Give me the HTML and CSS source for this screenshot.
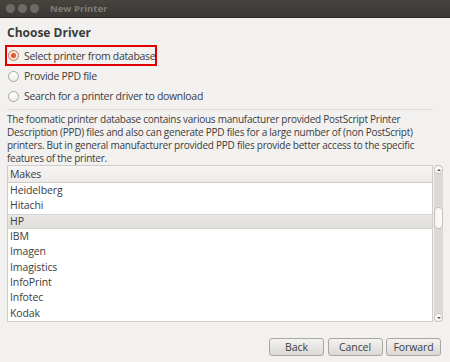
FILE: index.html
```html
<!DOCTYPE html>
<html lang="en">
<head>
    <meta charset="UTF-8">
    <title>New Printer</title>
    <link rel="stylesheet" href="styles.css">
</head>
<body>
    <div class="window">
        <div class="titlebar">
            <div class="controls">
                <span class="ctl"></span>
                <span class="ctl"></span>
                <span class="ctl"></span>
            </div>
            <span class="title">New Printer</span>
        </div>

        <div class="content">
            <h1>Choose Driver</h1>
            <div class="options">
                <label class="option highlight"><span class="radio checked"></span>Select printer from database</label>
                <label class="option"><span class="radio"></span>Provide PPD file</label>
                <label class="option"><span class="radio"></span>Search for a printer driver to download</label>
            </div>
            <hr class="sep">
            <p class="desc">The foomatic printer database contains various manufacturer provided PostScript Printer Description (PPD) files and also can generate PPD files for a large number of (non PostScript) printers. But in general manufacturer provided PPD files provide better access to the specific features of the printer.</p>

            <div class="list-wrap">
                <div class="list">
                    <div class="list-head">Makes</div>
                    <div class="row">Heidelberg</div>
                    <div class="row">Hitachi</div>
                    <div class="row selected">HP</div>
                    <div class="row">IBM</div>
                    <div class="row">Imagen</div>
                    <div class="row">Imagistics</div>
                    <div class="row">InfoPrint</div>
                    <div class="row">Infotec</div>
                    <div class="row">Kodak</div>
                </div>
                <div class="scrollbar">
                    <span class="arrow up"></span>
                    <span class="thumb"></span>
                    <span class="arrow down"></span>
                </div>
            </div>

            <div class="buttons">
                <button>Back</button>
                <button>Cancel</button>
                <button>Forward</button>
            </div>
        </div>
    </div>
</body>
</html>
```

FILE: styles.css
```css
body {
    margin: 0;
    font-family: "Open Sans", "DejaVu Sans", sans-serif;
    font-size: 10.5px;
    color: #3c3c3c;
    background: #f2f1f0;
}

.window {
    width: 450px;
    height: 362px;
    display: flex;
    flex-direction: column;
    background: #f2f1f0;
}

.titlebar {
    height: 17px;
    background: linear-gradient(#45443f, #3a3935);
    border-bottom: 1px solid #2d2c29;
    display: flex;
    align-items: center;
    padding-left: 6px;
}

.controls {
    display: flex;
    gap: 3px;
}

.ctl {
    width: 9px;
    height: 9px;
    border-radius: 50%;
    background: #6d6b66;
}

.title {
    margin-left: 11px;
    color: #7e7b75;
    font-weight: bold;
    font-size: 9.5px;
}

.content {
    padding: 6px 7px 0 7px;
    flex: 1;
    display: flex;
    flex-direction: column;
}

h1 {
    margin: 0;
    font-size: 12px;
    font-weight: bold;
    color: #3c3c3c;
    height: 18px;
    line-height: 18px;
}

.options {
    display: flex;
    flex-direction: column;
    margin-top: 3px;
}

.option {
    display: flex;
    align-items: center;
    height: 20px;
    width: 152px;
    white-space: nowrap;
    border: 2px solid transparent;
    margin-left: -2px;
    padding-left: 1px;
    box-sizing: border-box;
    letter-spacing: -0.3px;
}

.option.highlight {
    border-color: #e00000;
    height: 21px;
}

.radio {
    width: 9px;
    height: 9px;
    border-radius: 50%;
    border: 1px solid #a8a5a0;
    background: linear-gradient(#ffffff, #eeedeb);
    margin-right: 5px;
    flex: none;
    display: flex;
    align-items: center;
    justify-content: center;
}

.radio.checked {
    border-color: #c0795a;
    background: #f6e6dd;
}

.radio.checked::after {
    content: "";
    width: 5px;
    height: 5px;
    border-radius: 50%;
    background: #dd5a2a;
}

.sep {
    border: none;
    border-top: 1px solid #dedcd8;
    margin: 3px 10px 3px 0;
}

.desc {
    margin: 0;
    line-height: 13px;
    font-size: 10px;
    letter-spacing: -0.25px;
    padding-right: 14px;
}

.list-wrap {
    display: flex;
    height: 157px;
}

.list {
    flex: none;
    width: 426px;
    background: #fff;
    border: 1px solid #d0cdc8;
    box-sizing: border-box;
    overflow: hidden;
}

.list-head {
    height: 16px;
    line-height: 16px;
    padding-left: 2px;
    background: linear-gradient(#f6f5f4, #ecebe9);
    border-bottom: 1px solid #cfccc7;
    letter-spacing: -0.1px;
}

.row {
    height: 15.33px;
    line-height: 15.33px;
    padding-left: 2px;
    letter-spacing: -0.1px;
}

.row.selected {
    background: linear-gradient(#e9e8e6, #dfdedb);
    border-top: 1px solid #d8d6d2;
    border-bottom: 1px solid #d8d6d2;
    height: 13.33px;
    line-height: 13.33px;
}

.scrollbar {
    width: 9px;
    margin-left: 1px;
    background: #dcdad6;
    border-radius: 4px;
    position: relative;
    display: flex;
    flex-direction: column;
    justify-content: space-between;
}

.arrow {
    width: 9px;
    height: 9px;
    background: #fafafa;
    border-radius: 4px;
    box-sizing: border-box;
    border: 1px solid #c4c1bc;
    display: flex;
    align-items: center;
    justify-content: center;
}

.arrow.up::after {
    content: "";
    border: 2px solid transparent;
    border-bottom: 2px solid #555;
    margin-top: -2px;
}

.arrow.down::after {
    content: "";
    border: 2px solid transparent;
    border-top: 2px solid #555;
    margin-top: 2px;
}

/* thumb floats over the track */
.thumb {
    position: absolute;
    left: 0;
    top: 42px;
    width: 9px;
    height: 22px;
    background: linear-gradient(90deg, #f4f3f2, #fdfdfd);
    border: 1px solid #c4c1bc;
    border-radius: 4px;
    box-sizing: border-box;
}

.buttons {
    display: flex;
    justify-content: flex-end;
    gap: 3.5px;
    margin-top: 16px;
    padding-right: 2px;
}

button {
    font-family: inherit;
    font-size: 10.5px;
    letter-spacing: -0.1px;
    color: #404040;
    height: 18px;
    width: 55px;
    padding: 0;
    border: 1px solid #aaa7a1;
    border-radius: 3px;
    background: linear-gradient(#f4f3f2, #dad8d4);
}
```
